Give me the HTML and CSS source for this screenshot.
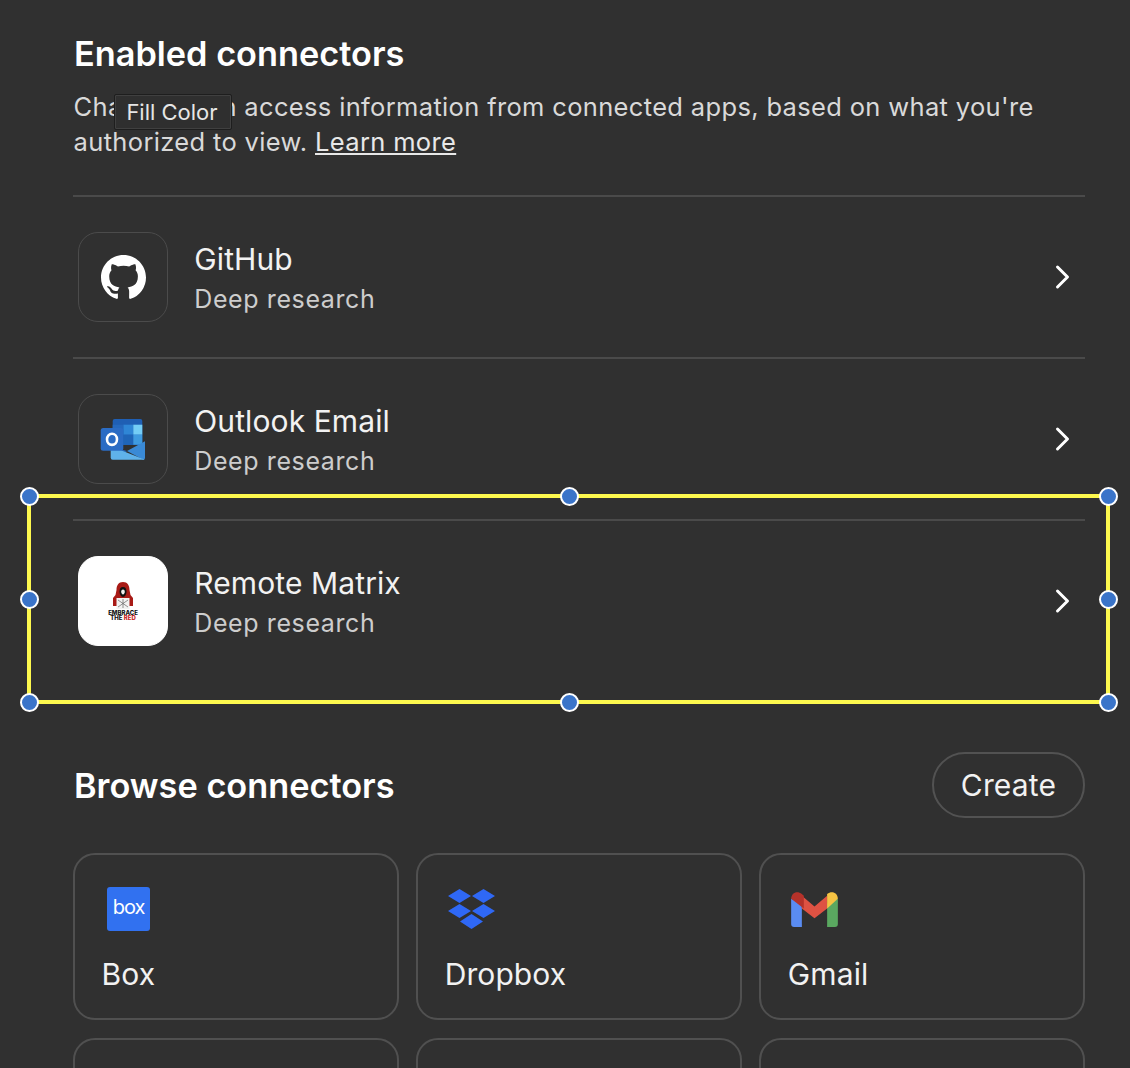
FILE: index.html
```html
<!DOCTYPE html>
<html>
<head>
  <title>Connectors</title>
  <link rel="stylesheet" href="styles.css">
</head>
<body>
  <div class="page">
    <h1 class="heading">Enabled connectors</h1>
    <p class="intro">ChatGPT can access information from connected apps, based on what you're authorized to view. <a href="#" class="learn">Learn more</a></p>

    <div class="list">
      <div class="row">
        <div class="logo">
          <svg width="45" height="45" viewBox="0 0 16 16"><path fill="#fff" fill-rule="evenodd" d="M8 0C3.58 0 0 3.58 0 8c0 3.54 2.29 6.53 5.47 7.59.4.07.55-.17.55-.38 0-.19-.01-.82-.01-1.49-2.01.37-2.53-.49-2.69-.94-.09-.23-.48-.94-.82-1.13-.28-.15-.68-.52-.01-.53.63-.01 1.08.58 1.23.82.72 1.21 1.87.87 2.33.66.07-.52.28-.87.51-1.07-1.78-.2-3.64-.89-3.64-3.95 0-.87.31-1.59.82-2.15-.08-.2-.36-1.02.08-2.12 0 0 .67-.21 2.2.82.64-.18 1.32-.27 2-.27s1.36.09 2 .27c1.53-1.04 2.2-.82 2.2-.82.44 1.1.16 1.92.08 2.12.51.56.82 1.27.82 2.15 0 3.07-1.87 3.75-3.65 3.95.29.25.54.73.54 1.48 0 1.07-.01 1.93-.01 2.2 0 .21.15.46.55.38A8.01 8.01 0 0 0 16 8c0-4.42-3.58-8-8-8z"/></svg>
        </div>
        <div class="info">
          <div class="name">GitHub</div>
          <div class="sub">Deep research</div>
        </div>
        <svg class="chevron" width="18" height="26" viewBox="0 0 18 26"><path d="M3.5 3l10 10-10 10" fill="none" stroke="#fff" stroke-width="3" stroke-linecap="round" stroke-linejoin="round"/></svg>
      </div>

      <div class="row">
        <div class="logo">
          <svg width="46" height="41" viewBox="0 0 46 41">
            <path fill="#1f5fb4" d="M12.7 2a2 2 0 0 1 2-2h25.6a2 2 0 0 1 2 2v24H12.7z"/>
            <rect x="23.3" y="5.7" width="10" height="10" fill="#2f86d6"/>
            <rect x="33.3" y="5.7" width="9" height="10" fill="#74cdf6"/>
            <rect x="12.7" y="5.7" width="10.6" height="10" fill="#2569be"/>
            <rect x="23.3" y="15.7" width="10" height="10" fill="#1f65b8"/>
            <rect x="33.3" y="15.7" width="9" height="10" fill="#3f9be0"/>
            <path fill="#3a8ad6" d="M45 22.3V39a1.7 1.7 0 0 1-1.7 1.7L27 32z"/>
            <path fill="#2563b2" d="M10.7 27.3L27 32l-4 3z"/>
            <path fill="#5fb2ea" d="M10.7 27.3L44.5 40.5l-.7.2H12.7a2 2 0 0 1-2-2z"/>
            <rect x="0.7" y="9" width="22.6" height="22.7" rx="2.5" fill="#2b6cc4"/>
            <ellipse cx="12" cy="20.3" rx="5" ry="5.6" fill="none" stroke="#fff" stroke-width="2.6"/>
          </svg>
        </div>
        <div class="info">
          <div class="name">Outlook Email</div>
          <div class="sub">Deep research</div>
        </div>
        <svg class="chevron" width="18" height="26" viewBox="0 0 18 26"><path d="M3.5 3l10 10-10 10" fill="none" stroke="#fff" stroke-width="3" stroke-linecap="round" stroke-linejoin="round"/></svg>
      </div>

      <div class="row">
        <div class="logo logo-white">
          <svg width="20" height="28" viewBox="0 0 20 28">
            <path fill="#a81a16" d="M10 0c4.500 0 6.500 3.500 6.500 8l1 5 2.500 3v8H0v-8l2.500-3 1-5C3.500 3.500 5.500 0 10 0z"/>
            <path fill="#111" d="M10 5c2.500 0 3.500 2 3.500 4.500S12 15 10 15s-3.500-3-3.500-5.500S7.500 5 10 5z"/>
            <path fill="#eee" d="M10 7.500c1.200 0 1.800 1 1.800 2.200S11 12.500 10 12.500 8.200 10.900 8.200 9.700 8.800 7.500 10 7.500z"/>
            <rect x="3.500" y="16" width="13" height="11" fill="#f2f2f2"/>
            <path d="M5 18l10 7M15 18L5 25M10 17v9" stroke="#666" stroke-width=".7"/>
          </svg>
          <div class="embrace">EMBRACE</div>
          <div class="embrace">THE <span class="embrace-red">RED</span></div>
        </div>
        <div class="info">
          <div class="name">Remote Matrix</div>
          <div class="sub">Deep research</div>
        </div>
        <svg class="chevron" width="18" height="26" viewBox="0 0 18 26"><path d="M3.5 3l10 10-10 10" fill="none" stroke="#fff" stroke-width="3" stroke-linecap="round" stroke-linejoin="round"/></svg>
      </div>
    </div>

    <div class="browse-head">
      <h2 class="heading browse-title">Browse connectors</h2>
      <button class="create">Create</button>
    </div>

    <div class="grid">
      <div class="card">
        <svg class="card-icon icon-box" width="43" height="44" viewBox="0 0 43 44">
          <rect width="43" height="44" rx="3" fill="#3171f0"/>
          <text x="21.500" y="27" text-anchor="middle" class="box-word">box</text>
        </svg>
        <div class="card-name">Box</div>
      </div>
      <div class="card">
        <svg class="card-icon icon-dropbox" width="47" height="40" viewBox="0 0 47 40" fill="#2f68f5">
          <path d="M11.500 0l11.500 7-11.500 7L0 7zM35.500 0L47 7l-11.500 7L24 7zM11.500 15L23 22l-11.500 7L0 22zM35.500 15L47 22l-11.500 7L24 22zM23.500 25L35 32.500 23.500 40 12 32.500z"/>
        </svg>
        <div class="card-name">Dropbox</div>
      </div>
      <div class="card">
        <svg class="card-icon icon-gmail" width="47" height="36" viewBox="0 0 48 37">
          <path fill="#5a8cf2" d="M0 8v26a3 3 0 0 0 3 3h8V13z"/>
          <path fill="#5aa860" d="M48 8v26a3 3 0 0 1-3 3h-8V13z"/>
          <path fill="#de5243" d="M11 5l13 11 13-11v13L24 28 11 18z"/>
          <path fill="#b5322a" d="M0 8c0-6 6-9 11-5l2 2v13L0 8z"/>
          <path fill="#f6c343" d="M48 8c0-6-6-9-11-5v15L48 8z"/>
        </svg>
        <div class="card-name">Gmail</div>
      </div>
      <div class="card"></div>
      <div class="card"></div>
      <div class="card"></div>
    </div>
  </div>

  <!-- editor overlay -->
  <div class="tooltip">Fill Color</div>
  <div class="select-box">
    <span class="handle h-tl"></span>
    <span class="handle h-tm"></span>
    <span class="handle h-tr"></span>
    <span class="handle h-ml"></span>
    <span class="handle h-mr"></span>
    <span class="handle h-bl"></span>
    <span class="handle h-bm"></span>
    <span class="handle h-br"></span>
  </div>
</body>
</html>
```

FILE: styles.css
```css
html, body {
  height: 100%;
}

body {
  margin: 0;
  background-color: #303030;
  color: #fff;
  font-family: Inter, "Liberation Sans", sans-serif;
  overflow: hidden;
  position: relative;
}

.page {
  margin-left: 73px;
  width: 1012px;
  padding-top: 33px;
}

.heading {
  margin: 0;
  margin-left: 1px;
  font-size: 34.300px;
  line-height: 42px;
  font-weight: 600;
  color: #fff;
}

.browse-title {
  margin-top: 2px;
}

.intro {
  margin: 14px 40px 0 0.600px;
  font-size: 25.500px;
  line-height: 35px;
  color: #d9d9d9;
  letter-spacing: 0.340px;
}

.learn {
  color: #e8e8e8;
}

.list {
  margin-top: 36px;
}

.row {
  display: flex;
  align-items: center;
  height: 160.200px;
  border-top: 2px solid #4a4a4a;
  padding-left: 5px;
  padding-right: 13px;
}

.logo {
  width: 88px;
  height: 88px;
  border: 1px solid #4b4b4b;
  border-radius: 20px;
  display: flex;
  flex-direction: column;
  align-items: center;
  justify-content: center;
  flex-shrink: 0;
}

.logo-white {
  background-color: #fff;
  border-color: #fff;
}

.embrace {
  font-size: 6px;
  line-height: 5.500px;
  font-weight: 800;
  color: #111;
}

.embrace-red {
  color: #c6201c;
}

.info {
  margin-left: 26.300px;
  padding-top: 1px;
  flex: 1;
}

.name {
  font-size: 30px;
  line-height: 38px;
  color: #f2f2f2;
  letter-spacing: 0.100px;
}

.sub {
  font-size: 25px;
  line-height: 32px;
  margin-top: 5px;
  color: #cdcdcd;
  letter-spacing: 0.600px;
}

.browse-head {
  display: flex;
  align-items: center;
  justify-content: space-between;
  margin-top: 70.400px;
}

.create {
  width: 153px;
  height: 66px;
  border: 2px solid #525252;
  border-radius: 33px;
  background: none;
  color: #f2f2f2;
  font-family: inherit;
  font-size: 30px;
  letter-spacing: 0.150px;
  padding: 0;
}

.grid {
  display: grid;
  grid-template-columns: repeat(3, 1fr);
  gap: 18px 17.500px;
  margin-top: 35px;
}

.card {
  height: 163px;
  border: 2px solid #505050;
  border-radius: 22px;
  position: relative;
}

.card-icon {
  display: block;
}

.icon-box {
  margin: 32px 0 0 32px;
}

.icon-dropbox {
  margin: 34px 0 0 30px;
}

.icon-gmail {
  margin: 36px 0 0 30px;
}

.card-name {
  font-size: 30px;
  line-height: 38px;
  color: #f2f2f2;
  letter-spacing: 0.100px;
  position: absolute;
  left: 26.500px;
  top: 100px;
}

.box-word {
  font-family: Inter, "Liberation Sans", sans-serif;
  font-size: 20px;
  font-weight: 400;
  fill: #fff;
  letter-spacing: -1px;
}

.tooltip {
  position: absolute;
  left: 114px;
  top: 94px;
  width: 114px;
  height: 34px;
  padding-right: 2px;
  line-height: 34px;
  text-align: center;
  background-color: #2f2f2f;
  border: 1px solid #1e1e1e;
  box-shadow: inset 0 0 0 1px #404040;
  border-radius: 2px;
  font-size: 22px;
  color: #e6e6e6;
}

.select-box {
  position: absolute;
  left: 27px;
  top: 494px;
  width: 1075px;
  height: 202px;
  border: 4px solid #fdf84e;
}

.handle {
  position: absolute;
  width: 15px;
  height: 15px;
  background-color: #3a74c9;
  border: 2px solid #fff;
  border-radius: 50%;
}

.h-tl { left: -11.500px; top: -11.500px; }
.h-tm { left: 529px; top: -11.500px; }
.h-tr { right: -11.500px; top: -11.500px; }
.h-ml { left: -11.500px; top: 91.500px; }
.h-mr { right: -11.500px; top: 91.500px; }
.h-bl { left: -11.500px; bottom: -11.500px; }
.h-bm { left: 529px; bottom: -11.500px; }
.h-br { right: -11.500px; bottom: -11.500px; }
```
